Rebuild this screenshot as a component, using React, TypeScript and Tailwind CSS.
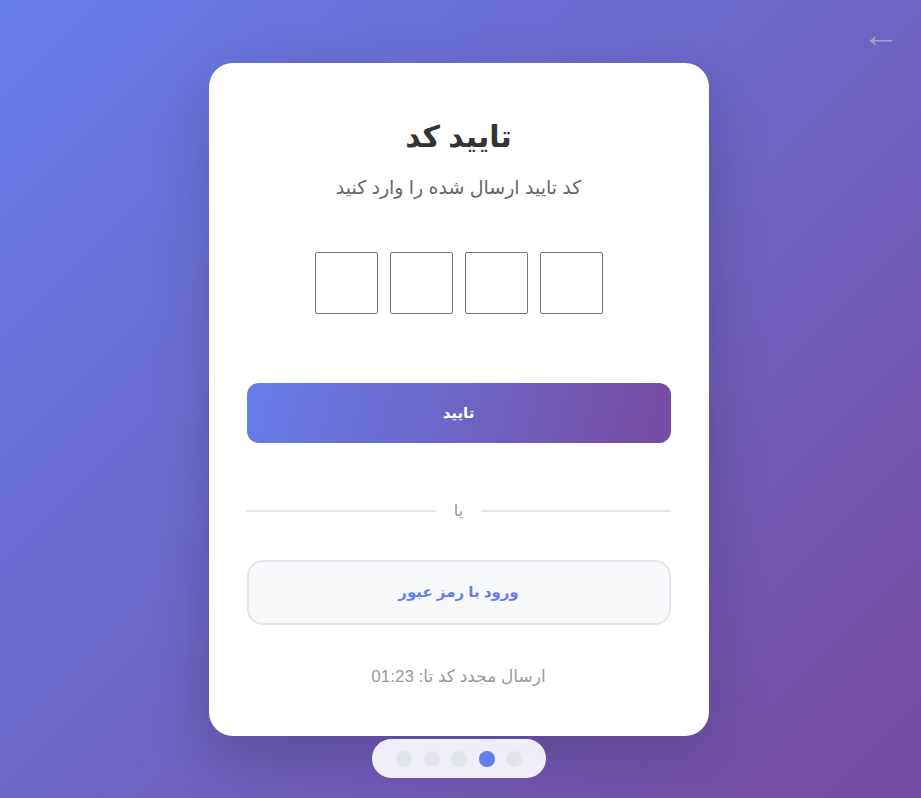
import React from "react";

function OtpBoxes() {
  return (
    <div className="flex justify-center gap-3 mt-[50px]" dir="ltr">
      {[0, 1, 2, 3].map((i) => (
        <input
          key={i}
          maxLength={1}
          className="w-[63px] h-[62px] border border-[#767676] rounded-[2px] bg-white text-center text-2xl outline-none"
        />
      ))}
    </div>
  );
}

function Dots() {
  const active = 3;
  return (
    <div
      dir="ltr"
      className="absolute bottom-5 left-[372px] flex items-center gap-[11.5px] px-6 h-[39px] rounded-full bg-white/90"
    >
      {[0, 1, 2, 3, 4].map((i) => (
        <span
          key={i}
          className={
            i === active
              ? "w-4 h-4 rounded-full bg-[#667eea]"
              : "w-4 h-4 rounded-full bg-[#e2e5ea]"
          }
        />
      ))}
    </div>
  );
}

export default function App() {
  return (
    <div
      dir="rtl"
      className="relative min-h-[798px] w-full overflow-hidden bg-[linear-gradient(135deg,#667eea_0%,#764ba2_100%)] flex items-center justify-center font-['Liberation_Sans','DejaVu_Sans',sans-serif]"
    >
      {/* back */}
      <button className="absolute top-[16px] right-[22px] text-[37px] leading-none text-[#a3a3c8]">
        ←
      </button>

      <div className="w-[500px] bg-white rounded-[24px] px-[38px] pt-[51px] pb-[46px] shadow-[0_20px_60px_rgba(0,0,0,0.2)] -translate-x-[2px]">
        <h1 className="text-center text-[30px] font-bold text-[#333]">تایید کد</h1>
        <p className="text-center text-[19px] text-[#666] mt-[15px]">
          کد تایید ارسال شده را وارد کنید
        </p>

        <OtpBoxes />

        <button className="mt-[69px] w-full h-[60px] rounded-xl text-white font-bold text-[15px] bg-[linear-gradient(105deg,#667eea_0%,#764ba2_100%)]">
          تایید
        </button>

        <div className="flex items-center mt-[56px] h-6">
          <div className="flex-1 h-[2px] bg-[#e5e7eb]" />
          <span className="px-[18px] text-[16px] text-[#999]">یا</span>
          <div className="flex-1 h-[2px] bg-[#e5e7eb]" />
        </div>

        <button className="mt-[37px] w-full h-[65px] rounded-2xl border-2 border-[#e2e5ea] bg-[#f7f8fa] text-[#667eea] font-bold text-[15px]">
          ورود با رمز عبور
        </button>

        <p className="text-center text-[17px] text-[#999] mt-[39px]">
          ارسال مجدد کد تا: 01:23
        </p>
      </div>

      <Dots />
    </div>
  );
}
